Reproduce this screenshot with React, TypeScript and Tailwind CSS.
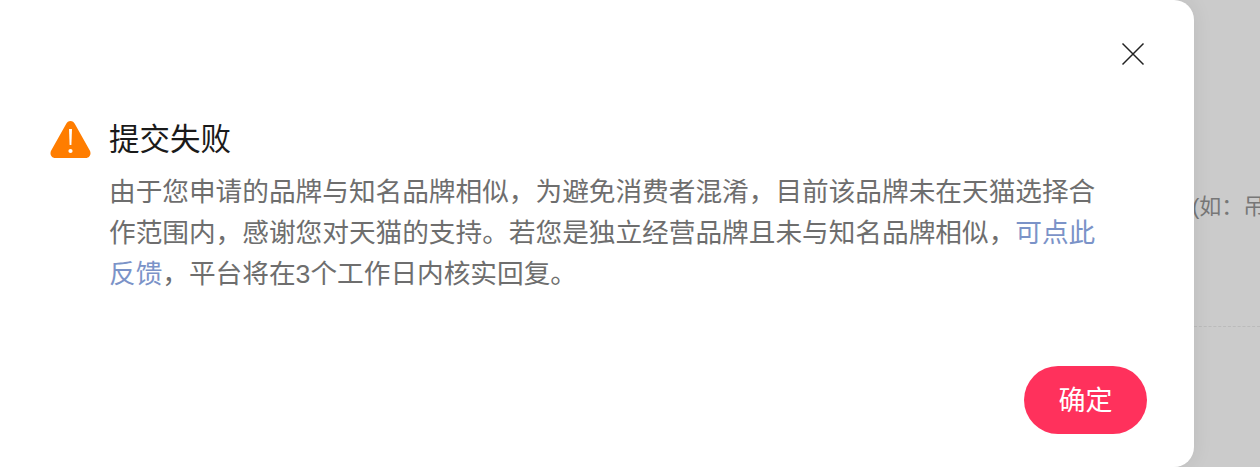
const cjk = "font-['Liberation_Sans','Noto_Sans_CJK_SC',sans-serif]";

export default function App() {
  return (
    <div className={`flex h-[467px] w-[1260px] overflow-hidden bg-[#cbcbcb] ${cjk}`}>
      <div className="relative z-10 flex h-[467px] w-[1194px] shrink-0 flex-col rounded-r-[20px] bg-white pl-[50px] pr-[47px] shadow-[0_0_20px_rgba(0,0,0,0.08)]">
        <div className="flex justify-end pt-[42px] pr-[2px]">
          <button className="h-[24px] w-[24px]">
            <svg viewBox="0 0 24 24" className="h-[24px] w-[24px]" fill="none" stroke="#222" strokeWidth="1.5">
              <path d="M1.5 1.5 L22.5 22.5 M22.5 1.5 L1.5 22.5" />
            </svg>
          </button>
        </div>

        <div className="mt-[33px] flex items-start">
          <svg viewBox="0 0 41 37" className="mt-[22px] h-[37px] w-[41px] shrink-0">
            <path
              d="M20.5 0 C22.5 0 23.9 1.1 24.9 2.9 L39.8 29.5 C41.6 32.9 39.8 37 35.8 37 L5.2 37 C1.2 37 -0.6 32.9 1.2 29.5 L16.1 2.9 C17.1 1.1 18.5 0 20.5 0 Z"
              fill="#ff7d00"
            />
            <path d="M19 8 L22 8 L21.4 24 L19.6 24 Z" fill="#fff" />
            <circle cx="20.5" cy="30" r="2.1" fill="#fff" />
          </svg>
          <div className="ml-[18px] w-[990px]">
            <div className="text-[30.5px] leading-[40px] text-[#1a1a1a] mt-[20px]">提交失败</div>
            <p className="mt-[13px] text-[26.67px] leading-[41px] text-[#6e6e6e]">
              由于您申请的品牌与知名品牌相似，为避免消费者混淆，目前该品牌未在天猫选择合作范围内，感谢您对天猫的支持。若您是独立经营品牌且未与知名品牌相似，
              <a className="text-[#7b93c8]">可点此反馈</a>
              ，平台将在3个工作日内核实回复。
            </p>
          </div>
        </div>

        <div className="mt-auto flex justify-end pb-[33px]">
          <button className="h-[68px] w-[123px] rounded-full bg-[#ff315c] pt-[2px] text-[27px] text-white">确定</button>
        </div>
      </div>

      <div className="flex-1 min-w-0">
        <div className="mt-[187px] -ml-[2px] whitespace-nowrap text-[22px] leading-[40px] text-[#777]">(如：吊牌</div>
        <div className="mt-[99px] border-t border-dashed border-[#bbb]" />
      </div>
    </div>
  );
}
